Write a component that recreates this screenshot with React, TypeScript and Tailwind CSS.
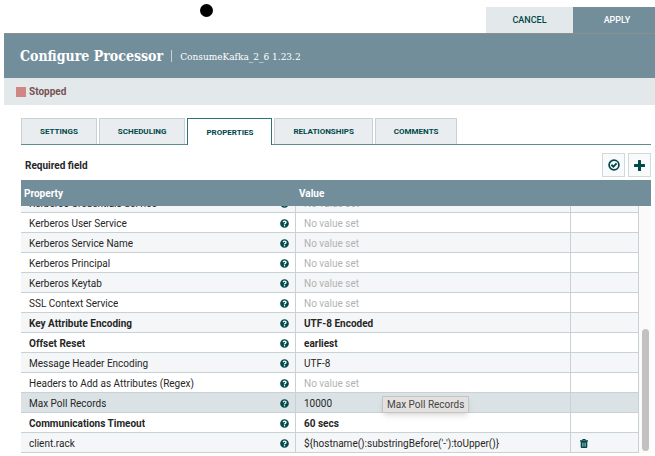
import { useLayoutEffect, useRef, useState } from 'react';
import { FaQuestionCircle } from 'react-icons/fa';
import clsx from 'clsx';

type Property = {
  name: string;
  value?: string;
  required?: boolean;
  hovered?: boolean;
  dynamic?: boolean;
};

const tabs = ['SETTINGS', 'SCHEDULING', 'PROPERTIES', 'RELATIONSHIPS', 'COMMENTS'];

const properties: Property[] = [
  { name: 'Kerberos Credentials Service' },
  { name: 'Kerberos User Service' },
  { name: 'Kerberos Service Name' },
  { name: 'Kerberos Principal' },
  { name: 'Kerberos Keytab' },
  { name: 'SSL Context Service' },
  { name: 'Key Attribute Encoding', value: 'UTF-8 Encoded', required: true },
  { name: 'Offset Reset', value: 'earliest', required: true },
  { name: 'Message Header Encoding', value: 'UTF-8' },
  { name: 'Headers to Add as Attributes (Regex)' },
  { name: 'Max Poll Records', value: '10000', hovered: true },
  { name: 'Communications Timeout', value: '60 secs', required: true },
  { name: 'client.rack', value: "${hostname():substringBefore('-'):toUpper()}", dynamic: true }
];

function VerifyIcon() {
  return (
    <svg viewBox="0 0 12 12" className="size-3" fill="none" stroke="currentColor">
      <circle cx="6" cy="6" r="4.9" strokeWidth="1.7" />
      <path d="M3.4 5.7 5.4 7.6 8.6 4.4" strokeWidth="1.9" />
    </svg>
  );
}

function PlusIcon() {
  return (
    <svg viewBox="0 0 11 11" className="size-[11px]" fill="currentColor">
      <rect x="4" y="0" width="3" height="11" rx=".6" />
      <rect x="0" y="4" width="11" height="3" rx=".6" />
    </svg>
  );
}

function TrashIcon() {
  return (
    <svg viewBox="0 0 8 9" className="h-[9px] w-2" fill="none">
      <path d="M2.6 1.4V.5h2.8v.9" stroke="currentColor" />
      <path d="M0 1.2h8v1.2H0zM.7 2.4h6.6V8a1 1 0 0 1-1 1H1.7a1 1 0 0 1-1-1z" fill="currentColor" />
      <path d="M2.6 3.6v4M4 3.6v4M5.4 3.6v4" stroke="#fff" strokeWidth=".5" />
    </svg>
  );
}

function PropertyRow({ property, striped }: { property: Property; striped: boolean }) {
  const { name, value, required, hovered, dynamic } = property;

  return (
    <tr
      className={clsx(
        'h-5 [&>td]:border-b [&>td]:border-[#c7d2d7] [&>td]:p-0 [&>td]:pt-[2px]',
        hovered ? 'bg-[#dbe2e5]' : striped ? 'bg-[#f4f6f7]' : 'bg-white',
        required && 'font-bold'
      )}
    >
      <td className="border-r">
        <div className="flex items-center justify-between pr-[6px] pl-2">
          <span className="truncate">{name}</span>
          <FaQuestionCircle size={9} className="shrink-0 text-[#004849]" />
        </div>
      </td>
      <td className="relative border-r">
        <div className={clsx('pl-2', !value && 'text-[#b0b3b4]')}>{value ?? 'No value set'}</div>
        {hovered && (
          <div
            role="tooltip"
            className="absolute top-[3px] left-[86px] z-10 border border-[#c4c4c2] bg-[#e2e1df] px-1 leading-[15px] whitespace-nowrap text-[#444] shadow-md"
          >
            {name}
          </div>
        )}
      </td>
      <td className="border-r">
        {dynamic && (
          <button type="button" aria-label={`Delete ${name}`} className="ml-[9px] block text-[#004849]">
            <TrashIcon />
          </button>
        )}
      </td>
    </tr>
  );
}

export default function App() {
  const [activeTab, setActiveTab] = useState('PROPERTIES');
  const listRef = useRef<HTMLDivElement>(null);

  useLayoutEffect(() => {
    const list = listRef.current;
    if (list) list.scrollTop = list.scrollHeight;
  }, []);

  return (
    <div className="flex h-screen flex-col bg-white pb-[3px] pl-1 font-['Roboto','Liberation_Sans',sans-serif] text-[10px] text-[#262626]">
      <div className="flex items-start justify-between">
        <div className="mt-1 ml-[196px] size-[13px] rounded-full bg-black" />
        <div className="mt-[7px] flex h-[26px] text-[9px] font-medium">
          <button type="button" className="w-[87px] bg-[#e3e8eb] pt-px text-[#004849]">CANCEL</button>
          <button type="button" className="w-[82px] bg-[#728e9b] pt-px pl-[6px] text-white">APPLY</button>
        </div>
      </div>

      <header className="flex h-[45px] shrink-0 items-center border-t border-[#8b8f90] bg-[#728e9b] pl-4 font-['Roboto_Slab','DejaVu_Serif_Condensed','DejaVu_Serif',serif] text-white">
        <h1 className="text-[14px] font-bold">Configure Processor</h1>
        <div className="mx-2 h-3 w-px bg-[#c7d2d7]" />
        <span className="pt-px text-[10px]">ConsumeKafka_2_6 1.23.2</span>
      </header>

      <div className="flex h-[27px] shrink-0 items-center gap-[3px] bg-[#e3e8eb] pl-3 font-bold text-[#775351]">
        <div className="size-[10px] bg-[#d18686]" />
        Stopped
      </div>

      <main className="flex min-h-0 flex-1 flex-col pt-[13px] pr-1 pl-[17px]">
        <div role="tablist" className="flex h-[27px] shrink-0 gap-[2px] border-b border-[#5f8c8d] text-[8px] font-bold">
          {tabs.map((tab) => (
            <button
              key={tab}
              type="button"
              role="tab"
              aria-selected={tab === activeTab}
              onClick={() => setActiveTab(tab)}
              className={clsx(
                'border border-b-0 px-[18px] pt-px text-[#004849]',
                tab === activeTab ? '-mb-px border-[#2f7374] bg-white' : 'border-[#c7d2d7] bg-[#e9edf0]'
              )}
            >
              {tab}
            </button>
          ))}
        </div>

        <div className="flex items-center justify-between py-2 pl-1">
          <span className="font-bold">Required field</span>
          <div className="flex gap-[3px] text-[#004849]">
            <button
              type="button"
              aria-label="Verify properties"
              className="flex h-[24px] w-[23px] items-center justify-center border border-[#cfdadd] bg-[#f9fafb]"
            >
              <VerifyIcon />
            </button>
            <button
              type="button"
              aria-label="Add property"
              className="flex h-[24px] w-[23px] items-center justify-center border border-[#cfdadd] bg-[#f9fafb]"
            >
              <PlusIcon />
            </button>
          </div>
        </div>

        <div className="-mt-[5px] flex min-h-0 flex-1">
          <div ref={listRef} className="min-w-0 flex-1 overflow-hidden">
            <table className="w-full table-fixed border-separate border-spacing-0">
              <colgroup>
                <col className="w-[44.5%]" />
                <col className="w-[44.5%]" />
                <col />
              </colgroup>
              <thead className="sticky top-0 z-20 bg-[#728e9b] text-left text-white">
                <tr className="h-[26px] [&>th]:p-0 [&>th]:pl-[3px] [&>th]:font-bold">
                  <th scope="col">Property</th>
                  <th scope="col">Value</th>
                  <th scope="col" aria-label="Actions" />
                </tr>
              </thead>
              <tbody>
                {properties.map((property, index) => (
                  <PropertyRow key={property.name} property={property} striped={index % 2 === 0} />
                ))}
              </tbody>
            </table>
          </div>

          {/* scroll track, with the header colour carried across its top */}
          <div className="flex w-3 flex-col">
            <div className="h-[26px] bg-[#728e9b]" />
            <div className="flex flex-1 flex-col justify-end bg-[#fafafa] pb-[2px] pl-[3px]">
              <div className="h-1/2 w-[7px] rounded-full bg-[#c1c1c1]" />
            </div>
          </div>
        </div>
      </main>
    </div>
  );
}
